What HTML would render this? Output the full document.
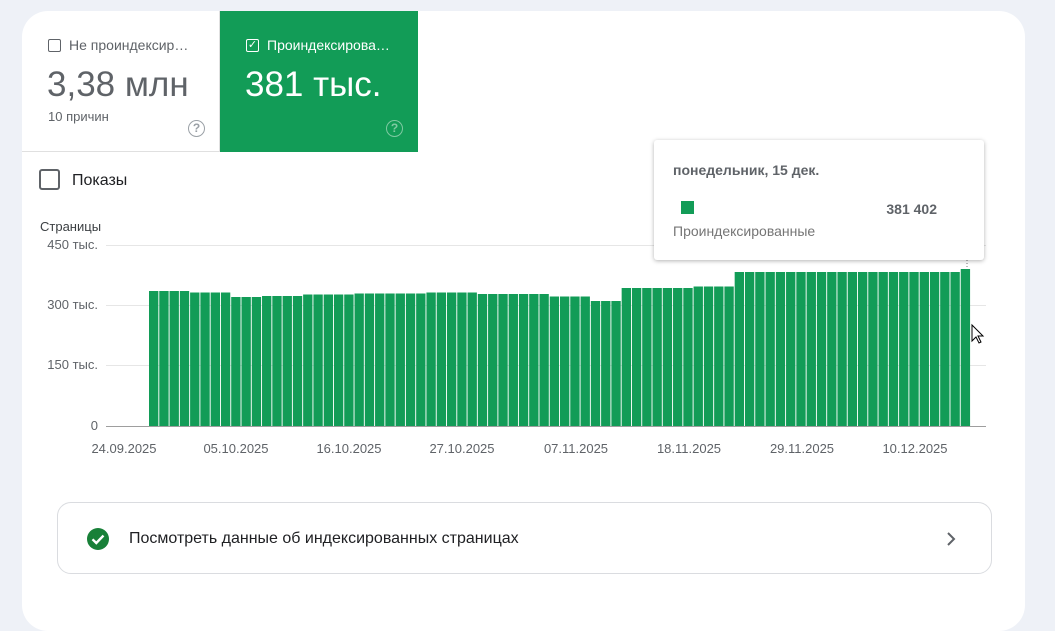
<!DOCTYPE html>
<html><head><meta charset="utf-8"><style>
*{margin:0;padding:0;box-sizing:border-box}
body{width:1055px;height:608px;background:#eef1f7;font-family:"Liberation Sans",Arial,sans-serif;position:relative;overflow:hidden;color:#3c4043}
.card{position:absolute;left:22px;top:11px;width:1003px;height:620px;background:#fff;border-radius:26px;overflow:hidden}
.t1{position:absolute;left:0;top:0;width:198px;height:141px;border-bottom:1px solid #e0e0e0;border-right:1px solid #e0e0e0}
.t2{position:absolute;left:198px;top:0;width:198px;height:141px;background:#129c57;color:#fff}
.cb{position:absolute;width:13px;height:13px;border:1.5px solid #5f6368;border-radius:2px}
.lbl{position:absolute;font-size:14px;white-space:nowrap}
.big{position:absolute;font-size:35px}
.q{position:absolute;width:17px;height:17px;border:1.8px solid #9aa0a6;border-radius:50%;font-size:12px;text-align:center;line-height:14px;color:#9aa0a6;font-weight:bold}
.tip{position:absolute;left:654px;top:140px;width:330px;height:120px;background:#fff;border-radius:3px;box-shadow:0 1px 4px rgba(0,0,0,.3)}
.btn{position:absolute;left:57px;top:502px;width:935px;height:72px;border:1px solid #dadce0;border-radius:14px;background:#fff}
</style></head><body>
<div class="card">
 <div class="t1">
  <div class="cb" style="left:26px;top:28px"></div>
  <div class="lbl" style="left:47px;top:26px;color:#5f6368">Не проиндексир…</div>
  <div class="big" style="left:25px;top:54px;color:#5f6368">3,38 млн</div>
  <div class="lbl" style="left:26px;top:98px;font-size:13px;color:#5f6368">10 причин</div>
  <div class="q" style="left:166px;top:109px">?</div>
 </div>
 <div class="t2">
  <div class="cb" style="left:26px;top:28px;border-color:#fff;color:#fff;font-size:11px;line-height:10px;text-align:center">✓</div>
  <div class="lbl" style="left:47px;top:26px">Проиндексирова…</div>
  <div class="big" style="left:25px;top:54px">381 тыс.</div>
  <div class="q" style="left:166px;top:109px;border-color:#7fcaa2;color:#7fcaa2">?</div>
 </div>
 <div class="cb" style="left:17px;top:158px;width:21px;height:21px;border:2.5px solid #5f6368;border-radius:3px"></div>
 <div class="lbl" style="left:50px;top:161px;font-size:16px;color:#202124">Показы</div>
</div>
<svg style="position:absolute;left:0;top:0" width="1055" height="608">
 <g font-family="Liberation Sans,Arial,sans-serif" font-size="13" fill="#5f6368">
  <text x="40" y="231" fill="#3c4043">Страницы</text>
  <text x="98" y="249" text-anchor="end">450 тыс.</text>
  <text x="98" y="309" text-anchor="end">300 тыс.</text>
  <text x="98" y="369" text-anchor="end">150 тыс.</text>
  <text x="98" y="430" text-anchor="end">0</text>
  <text x="124" y="453" text-anchor="middle">24.09.2025</text>
  <text x="236" y="453" text-anchor="middle">05.10.2025</text>
  <text x="349" y="453" text-anchor="middle">16.10.2025</text>
  <text x="462" y="453" text-anchor="middle">27.10.2025</text>
  <text x="576" y="453" text-anchor="middle">07.11.2025</text>
  <text x="689" y="453" text-anchor="middle">18.11.2025</text>
  <text x="802" y="453" text-anchor="middle">29.11.2025</text>
  <text x="915" y="453" text-anchor="middle">10.12.2025</text>
 </g>
 <g stroke="#e6e6e6" stroke-width="1">
  <line x1="106" y1="245.5" x2="986" y2="245.5"/>
  <line x1="106" y1="305.5" x2="986" y2="305.5"/>
  <line x1="106" y1="365.5" x2="986" y2="365.5"/>
 </g>
 <g fill="#129c57" transform="translate(149,0) scale(10.275,1)">
  <rect x="0" y="291" width="0.91" height="135"/><rect x="1" y="291" width="0.91" height="135"/><rect x="2" y="291" width="0.91" height="135"/><rect x="3" y="291" width="0.91" height="135"/>
  <rect x="4" y="292.5" width="0.91" height="134"/><rect x="5" y="292.5" width="0.91" height="134"/><rect x="6" y="292.5" width="0.91" height="134"/><rect x="7" y="292.5" width="0.91" height="134"/>
  <rect x="8" y="297" width="0.91" height="129"/><rect x="9" y="297" width="0.91" height="129"/><rect x="10" y="297" width="0.91" height="129"/>
  <rect x="11" y="296" width="0.91" height="130"/><rect x="12" y="296" width="0.91" height="130"/><rect x="13" y="296" width="0.91" height="130"/><rect x="14" y="296" width="0.91" height="130"/>
  <rect x="15" y="294.5" width="0.91" height="132"/><rect x="16" y="294.5" width="0.91" height="132"/><rect x="17" y="294.5" width="0.91" height="132"/><rect x="18" y="294.5" width="0.91" height="132"/><rect x="19" y="294.5" width="0.91" height="132"/>
  <rect x="20" y="293.5" width="0.91" height="133"/><rect x="21" y="293.5" width="0.91" height="133"/><rect x="22" y="293.5" width="0.91" height="133"/><rect x="23" y="293.5" width="0.91" height="133"/><rect x="24" y="293.5" width="0.91" height="133"/><rect x="25" y="293.5" width="0.91" height="133"/><rect x="26" y="293.5" width="0.91" height="133"/>
  <rect x="27" y="292.5" width="0.91" height="134"/><rect x="28" y="292.5" width="0.91" height="134"/><rect x="29" y="292.5" width="0.91" height="134"/><rect x="30" y="292.5" width="0.91" height="134"/><rect x="31" y="292.5" width="0.91" height="134"/>
  <rect x="32" y="294" width="0.91" height="132"/><rect x="33" y="294" width="0.91" height="132"/><rect x="34" y="294" width="0.91" height="132"/><rect x="35" y="294" width="0.91" height="132"/><rect x="36" y="294" width="0.91" height="132"/><rect x="37" y="294" width="0.91" height="132"/><rect x="38" y="294" width="0.91" height="132"/>
  <rect x="39" y="296.5" width="0.91" height="130"/><rect x="40" y="296.5" width="0.91" height="130"/><rect x="41" y="296.5" width="0.91" height="130"/><rect x="42" y="296.5" width="0.91" height="130"/>
  <rect x="43" y="301" width="0.91" height="125"/><rect x="44" y="301" width="0.91" height="125"/><rect x="45" y="301" width="0.91" height="125"/>
  <rect x="46" y="288" width="0.91" height="138"/><rect x="47" y="288" width="0.91" height="138"/><rect x="48" y="288" width="0.91" height="138"/><rect x="49" y="288" width="0.91" height="138"/><rect x="50" y="288" width="0.91" height="138"/><rect x="51" y="288" width="0.91" height="138"/><rect x="52" y="288" width="0.91" height="138"/>
  <rect x="53" y="286.5" width="0.91" height="140"/><rect x="54" y="286.5" width="0.91" height="140"/><rect x="55" y="286.5" width="0.91" height="140"/><rect x="56" y="286.5" width="0.91" height="140"/>
  <rect x="57" y="272" width="0.91" height="154"/><rect x="58" y="272" width="0.91" height="154"/><rect x="59" y="272" width="0.91" height="154"/><rect x="60" y="272" width="0.91" height="154"/><rect x="61" y="272" width="0.91" height="154"/><rect x="62" y="272" width="0.91" height="154"/><rect x="63" y="272" width="0.91" height="154"/><rect x="64" y="272" width="0.91" height="154"/><rect x="65" y="272" width="0.91" height="154"/><rect x="66" y="272" width="0.91" height="154"/><rect x="67" y="272" width="0.91" height="154"/><rect x="68" y="272" width="0.91" height="154"/><rect x="69" y="272" width="0.91" height="154"/><rect x="70" y="272" width="0.91" height="154"/><rect x="71" y="272" width="0.91" height="154"/><rect x="72" y="272" width="0.91" height="154"/><rect x="73" y="272" width="0.91" height="154"/><rect x="74" y="272" width="0.91" height="154"/><rect x="75" y="272" width="0.91" height="154"/><rect x="76" y="272" width="0.91" height="154"/><rect x="77" y="272" width="0.91" height="154"/><rect x="78" y="272" width="0.91" height="154"/>
  <rect x="79" y="269" width="0.91" height="157"/>
 </g>
 <line x1="967" y1="245" x2="967" y2="269" stroke="#777" stroke-dasharray="1,2"/>
 <line x1="106" y1="426.5" x2="986" y2="426.5" stroke="#9e9e9e"/>
 <path d="M972 325 L972 341 L976 337 L979 343 L981 342 L978 336 L983 336 Z" fill="#fff" stroke="#000" stroke-width="1"/>
</svg>
<div class="tip">
 <div style="position:absolute;left:19px;top:22px;font-size:14px;font-weight:bold;color:#5f6368">понедельник, 15 дек.</div>
 <div style="position:absolute;left:27px;top:61px;width:13px;height:13px;background:#129c57"></div>
 <div style="position:absolute;right:47px;top:61px;font-size:14px;font-weight:bold;color:#5f6368">381 402</div>
 <div style="position:absolute;left:19px;top:83px;font-size:14px;color:#757575">Проиндексированные</div>
</div>
<div class="btn">
 <svg style="position:absolute;left:28px;top:24px" width="24" height="24"><circle cx="12" cy="12" r="11" fill="#188038"/><path d="M6.5 12.3 L10.3 16 L17.5 8.6" fill="none" stroke="#fff" stroke-width="2.4"/></svg>
 <div style="position:absolute;left:71px;top:27px;font-size:16px;color:#202124">Посмотреть данные об индексированных страницах</div>
 <svg style="position:absolute;left:886px;top:28px" width="14" height="16"><path d="M4 2 L10 8 L4 14" fill="none" stroke="#5f6368" stroke-width="2"/></svg>
</div>
</body></html>
